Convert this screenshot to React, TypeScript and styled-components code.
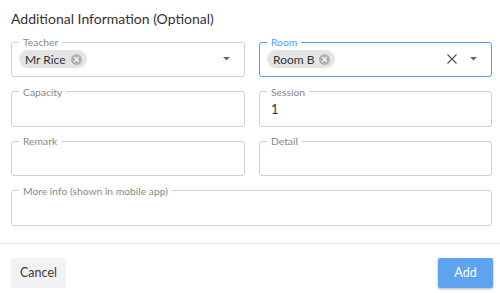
import React from "react";
import styled, { createGlobalStyle } from "styled-components";

const Global = createGlobalStyle`
  html, body { margin: 0; padding: 0; background: #fff; }
  body { font-family: Lato, "Open Sans", sans-serif; color: #333; }
  * { box-sizing: border-box; }
`;

const Page = styled.div`
  width: 500px;
  height: 293px;
  display: flex;
  flex-direction: column;
  background: #fff;
`;

const Body = styled.div`
  padding: 8px 8px 0 11px;
`;

const Title = styled.h2`
  margin: 0;
  font-size: 14px;
  line-height: 21px;
  font-weight: 400;
  color: #333;
  height: 28px;
`;

const Grid = styled.div`
  display: grid;
  grid-template-columns: 234px 233px;
  column-gap: 14px;
  row-gap: 8.5px;
`;

const Field = styled.fieldset<{ $wide?: boolean; $focused?: boolean }>`
  margin: 0;
  padding: 0 14px 6px 7px;
  min-width: 0;
  border: 1px solid ${(p) => (p.$focused ? "#4d9ef6" : "#cfcfcf")};
  border-radius: 3px;
  grid-column: ${(p) => (p.$wide ? "1 / -1" : "auto")};
`;

const Legend = styled.legend<{ $focused?: boolean }>`
  padding: 0 4px;
  margin-left: 0;
  font-size: 10.3px;
  line-height: 12px;
  color: ${(p) => (p.$focused ? "#4d9ef6" : "#888")};
`;

const Content = styled.div`
  height: 22px;
  display: flex;
  align-items: center;
  gap: 8px;
`;

const Value = styled.span`
  font-size: 13px;
  color: #333;
  padding-left: 4px;
  flex: 1;
`;

const Spacer = styled.span`
  flex: 1;
`;

const Chip = styled.span`
  display: inline-flex;
  align-items: center;
  height: 18px;
  border-radius: 9px;
  background: #e4e4e4;
  padding: 0 5px 0 6px;
  gap: 5px;
  font-size: 12px;
  color: #333;
`;

const ChipDelete = styled.svg`
  width: 11px;
  height: 11px;
  display: block;
`;

const IconSvg = styled.svg<{ $gapAfter?: number }>`
  display: block;
  flex: none;
  margin-right: ${(p) => p.$gapAfter ?? 0}px;
`;

const Divider = styled.div`
  height: 1px;
  background: #e8e8e8;
  margin-top: 17px;
`;

const Footer = styled.div`
  display: flex;
  justify-content: space-between;
  padding: 14px 7px 0 11px;
`;

const Button = styled.button<{ $primary?: boolean }>`
  width: 55px;
  height: 30px;
  border: none;
  border-radius: 2px;
  font-family: Lato, "Open Sans", sans-serif;
  font-size: 12.5px;
  cursor: pointer;
  background: ${(p) => (p.$primary ? "#5ea3ef" : "#f2f2f2")};
  color: ${(p) => (p.$primary ? "#fff" : "#3a3a3a")};
  box-shadow: ${(p) =>
    p.$primary ? "0 1px 3px rgba(0,0,0,0.3)" : "none"};
`;

const DeleteIcon = () => (
  <ChipDelete viewBox="0 0 12 12">
    <circle cx="6" cy="6" r="6" fill="#b3b3b3" />
    <path d="M4 4 L8 8 M8 4 L4 8" stroke="#fff" strokeWidth="1.4" strokeLinecap="round" />
  </ChipDelete>
);

const Arrow = () => (
  <IconSvg width="7" height="4" viewBox="0 0 7 4">
    <path d="M0 0 L7 0 L3.5 3.5 Z" fill="#666" />
  </IconSvg>
);

const ClearIcon = () => (
  <IconSvg width="10" height="10" viewBox="0 0 10 10" $gapAfter={5}>
    <path d="M0.5 0.5 L9.5 9.5 M9.5 0.5 L0.5 9.5" stroke="#555" strokeWidth="1.2" />
  </IconSvg>
);

type Props = { label: string; focused?: boolean; wide?: boolean; children?: React.ReactNode };

const OutlinedField = ({ label, focused, wide, children }: Props) => (
  <Field $focused={focused} $wide={wide}>
    <Legend $focused={focused}>{label}</Legend>
    <Content>{children}</Content>
  </Field>
);

export default function App() {
  return (
    <Page>
      <Global />
      <Body>
        <Title>Additional Information (Optional)</Title>
        <Grid>
          <OutlinedField label="Teacher">
            <Chip>
              Mr Rice
              <DeleteIcon />
            </Chip>
            <Spacer />
            <Arrow />
          </OutlinedField>
          <OutlinedField label="Room" focused>
            <Chip>
              Room B
              <DeleteIcon />
            </Chip>
            <Spacer />
            <ClearIcon />
            <Arrow />
          </OutlinedField>
          <OutlinedField label="Capacity" />
          <OutlinedField label="Session">
            <Value>1</Value>
          </OutlinedField>
          <OutlinedField label="Remark" />
          <OutlinedField label="Detail" />
          <OutlinedField label="More info (shown in mobile app)" wide />
        </Grid>
      </Body>
      <Divider />
      <Footer>
        <Button>Cancel</Button>
        <Button $primary>Add</Button>
      </Footer>
    </Page>
  );
}
